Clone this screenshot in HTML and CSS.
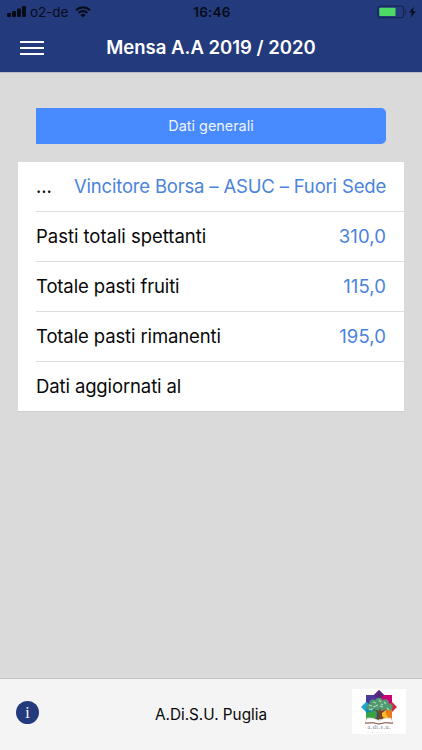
FILE: index.html
```html
<!DOCTYPE html>
<html lang="it">
	<head>
		<meta charset="UTF-8">
		<meta name="viewport" content="width=device-width, initial-scale=1.0">
		<title>Mensa</title>
		<link rel="stylesheet" href="styles.css">
	</head>
	<body>
		<header class="header">
			<div class="status">
				<div class="status_left">
					<svg class="signal" width="19" height="11" viewBox="0 0 19 11">
						<rect x="0" y="7" width="4" height="4" rx="1"/>
						<rect x="5" y="5" width="4" height="6" rx="1"/>
						<rect x="10" y="2.5" width="4" height="8.5" rx="1"/>
						<rect x="15" y="0" width="4" height="11" rx="1"/>
					</svg>
					<span class="carrier">o2-de</span>
					<svg class="wifi" width="16" height="12" viewBox="0 0 16 12">
						<path d="M1 4.2a10.2 10.2 0 0 1 14 0M3.6 6.9a6.4 6.4 0 0 1 8.8 0" fill="none" stroke="#080b18" stroke-width="2.1"/>
						<path d="M5.5 9a3.7 3.7 0 0 1 5 0L8 11.6z"/>
					</svg>
				</div>
				<span class="time">16:46</span>
				<div class="status_right">
					<svg width="40" height="14" viewBox="0 0 40 14">
						<rect x=".7" y="1.2" width="26" height="11.4" rx="2.6" fill="none" stroke="#172655" stroke-width="1.2"/>
						<rect x="2.3" y="2.8" width="16.2" height="8.2" rx=".8" fill="#4cd964"/>
						<path d="M28 5v4q1.4-.5 1.4-2T28 5z" fill="#172655"/>
						<path d="M36.8 1.8 32.2 7.6h2.7L33.8 12.4l5-6.2h-3z"/>
					</svg>
				</div>
			</div>
			<div class="navbar">
				<button class="menu" aria-label="Menu"><span></span><span></span><span></span></button>
				<h1>Mensa A.A 2019 / 2020</h1>
			</div>
		</header>
		<main class="content">
			<div class="segment">Dati generali</div>
			<ul class="list">
				<li><span class="label">...</span><span class="value wide">Vincitore Borsa – ASUC – Fuori Sede</span></li>
				<li><span class="label spaced">Pasti totali spettanti</span><span class="value">310,0</span></li>
				<li><span class="label">Totale pasti fruiti</span><span class="value">115,0</span></li>
				<li><span class="label">Totale pasti rimanenti</span><span class="value">195,0</span></li>
				<li><span class="label">Dati aggiornati al</span></li>
			</ul>
		</main>
		<footer class="footer">
			<button class="info" aria-label="Info">i</button>
			<span class="name">A.Di.S.U. Puglia</span>
			<svg class="logo" width="54" height="45" viewBox="0 0 54 45">
				<rect width="54" height="45" fill="#fff"/>
				<!-- stella a otto punte -->
				<path d="M27 1v17H14V6h8z" fill="#63318f"/>
				<path d="M27 1l5 5h8v12H27z" fill="#c80078"/>
				<path d="M27 1l5 5-5 5-5-5z" fill="#582a7d"/>
				<path d="M14 6h8l5 12H14z" fill="#493a9b"/>
				<path d="M14 13l-5 5 5 5 8-5z" fill="#20a6cf"/>
				<path d="M40 13l5 5-5 5-8-5z" fill="#d32342"/>
				<path d="M14 18h13v13H14z" fill="#1587b5"/>
				<path d="M14 24l10-3v10H14z" fill="#36a344"/>
				<path d="M27 18h13v13H27z" fill="#ef7a16"/>
				<path d="M27 24l6-2 4 9H27z" fill="#f4bd22"/>
				<!-- chioma e tronco -->
				<g fill="#4f9a70">
					<circle cx="18" cy="18" r="3.3"/>
					<circle cx="21" cy="14" r="3.5"/>
					<circle cx="27" cy="12.5" r="3.7"/>
					<circle cx="33" cy="14" r="3.7"/>
					<circle cx="37" cy="18" r="3.6"/>
					<ellipse cx="28" cy="17.5" rx="9" ry="4"/>
				</g>
				<path d="M17 16l3 1m1-4 3 1m3-3 2 2m3 0 2 2m-13 3 3-1m4 0 3 1m4 1 2 2m-20-1 3 1m9-6 2 1m-7 0 2 1m-7 3h2m11 2h2" fill="none" stroke="#b2d8ba" stroke-width="1.1"/>
				<path d="M21 20l4 3v5l-3 2h11l-3-3v-3l5-4-6 2-1-3-1 3z" fill="#70452f"/>
				<!-- libro -->
				<path d="M15 29q7-1 12 3 5-4 12-3l2 5q-9-1.5-14 1-5-2.5-14-1z" fill="#fff" stroke="#c9b5ac" stroke-width=".5"/>
				<path d="M13 34.2q9-1.3 14 .8 5-2.1 14-.8" fill="none" stroke="#845044" stroke-width="1"/>
				<text class="logo_name" x="27" y="40.2" text-anchor="middle" textLength="23">a.di.s.u.</text>
				<text class="logo_sub" x="27" y="44.4" text-anchor="middle" textLength="23">PUGLIA</text>
			</svg>
		</footer>
	</body>
</html>
```
FILE: styles.css
```css
*{
	margin: 0;
	padding: 0;
	box-sizing: border-box;
}
body{
	height: 100vh;
	display: flex;
	flex-direction: column;
	overflow: hidden;
	background: #dadada;
	color: #080808;
	font-family: Inter, "Liberation Sans", sans-serif;
}
button{
	border: none;
	background: none;
}
.header{
	height: 73px;
	background: #233a7d;
	border-bottom: 1px solid #b9bdc8;
}
.status{
	height: 23px;
	padding: 0 5px 0 7px;
	display: grid;
	grid-template-columns: 1fr auto 1fr;
	align-items: center;
	color: #080b18;
	font-size: 13.5px;
}
.status svg{
	display: block;
	fill: #080b18;
}
.status_left{
	display: flex;
	align-items: center;
}
.carrier{
	margin: 1px 7px 0 4px;
	letter-spacing: -0.1px;
}
.time{
	font-weight: 600;
	padding-top: 1px;
	letter-spacing: 0.2px;
}
.status_right{
	display: flex;
	justify-content: flex-end;
}
.navbar{
	height: 49px;
	padding: 0 20px;
	display: grid;
	grid-template-columns: 24px 1fr 24px;
	align-items: center;
}
.menu{
	display: flex;
	flex-direction: column;
	gap: 4px;
}
.menu span{
	height: 2px;
	background: #fff;
}
.navbar h1{
	padding-bottom: 2px;
	color: #fff;
	font-size: 18.5px;
	font-weight: 600;
	line-height: 24px;
	text-align: center;
	white-space: nowrap;
}
.content{
	flex: 1;
	padding: 35px 18px 0;
}
.segment{
	height: 36px;
	margin: 0 18px 18px;
	border-radius: 0 5px 5px 0;
	background: #488aff;
	color: #eef4ff;
	font-size: 14.4px;
	line-height: 36px;
	text-align: center;
}
.list{
	background: #fff;
	list-style: none;
	padding-left: 18px;
	border-bottom: 1px solid #d0d0d0;
}
.list li{
	height: 50px;
	padding: 0 18px 2px 0;
	display: flex;
	align-items: center;
	justify-content: space-between;
	border-bottom: 1px solid #dedede;
	font-size: 18.5px;
	letter-spacing: -0.12px;
	white-space: nowrap;
}
.list li:last-child{
	height: 49px;
	border-bottom: none;
}
.spaced{
	letter-spacing: -0.03px;
}
.value{
	color: #4a83dc;
	letter-spacing: 0.1px;
}
.wide{
	letter-spacing: -0.18px;
}
.footer{
	height: 72px;
	padding: 0 16px 4px;
	display: grid;
	grid-template-columns: 54px 1fr 54px;
	align-items: center;
	background: #f4f4f4;
	border-top: 1px solid #c6c6c6;
}
.info{
	width: 23px;
	height: 23px;
	border-radius: 50%;
	background: #233a7d;
	color: #fff;
	font: 16px/22px "Liberation Serif", serif;
}
.name{
	padding-top: 3px;
	font-size: 15.3px;
	text-align: center;
}
.logo{
	display: block;
	margin-bottom: 2px;
}
.logo_name{
	font: 6.2px "Liberation Serif", serif;
	fill: #77778e;
}
.logo_sub{
	font: 2.4px "Liberation Serif", serif;
	fill: #9292a5;
}
```
